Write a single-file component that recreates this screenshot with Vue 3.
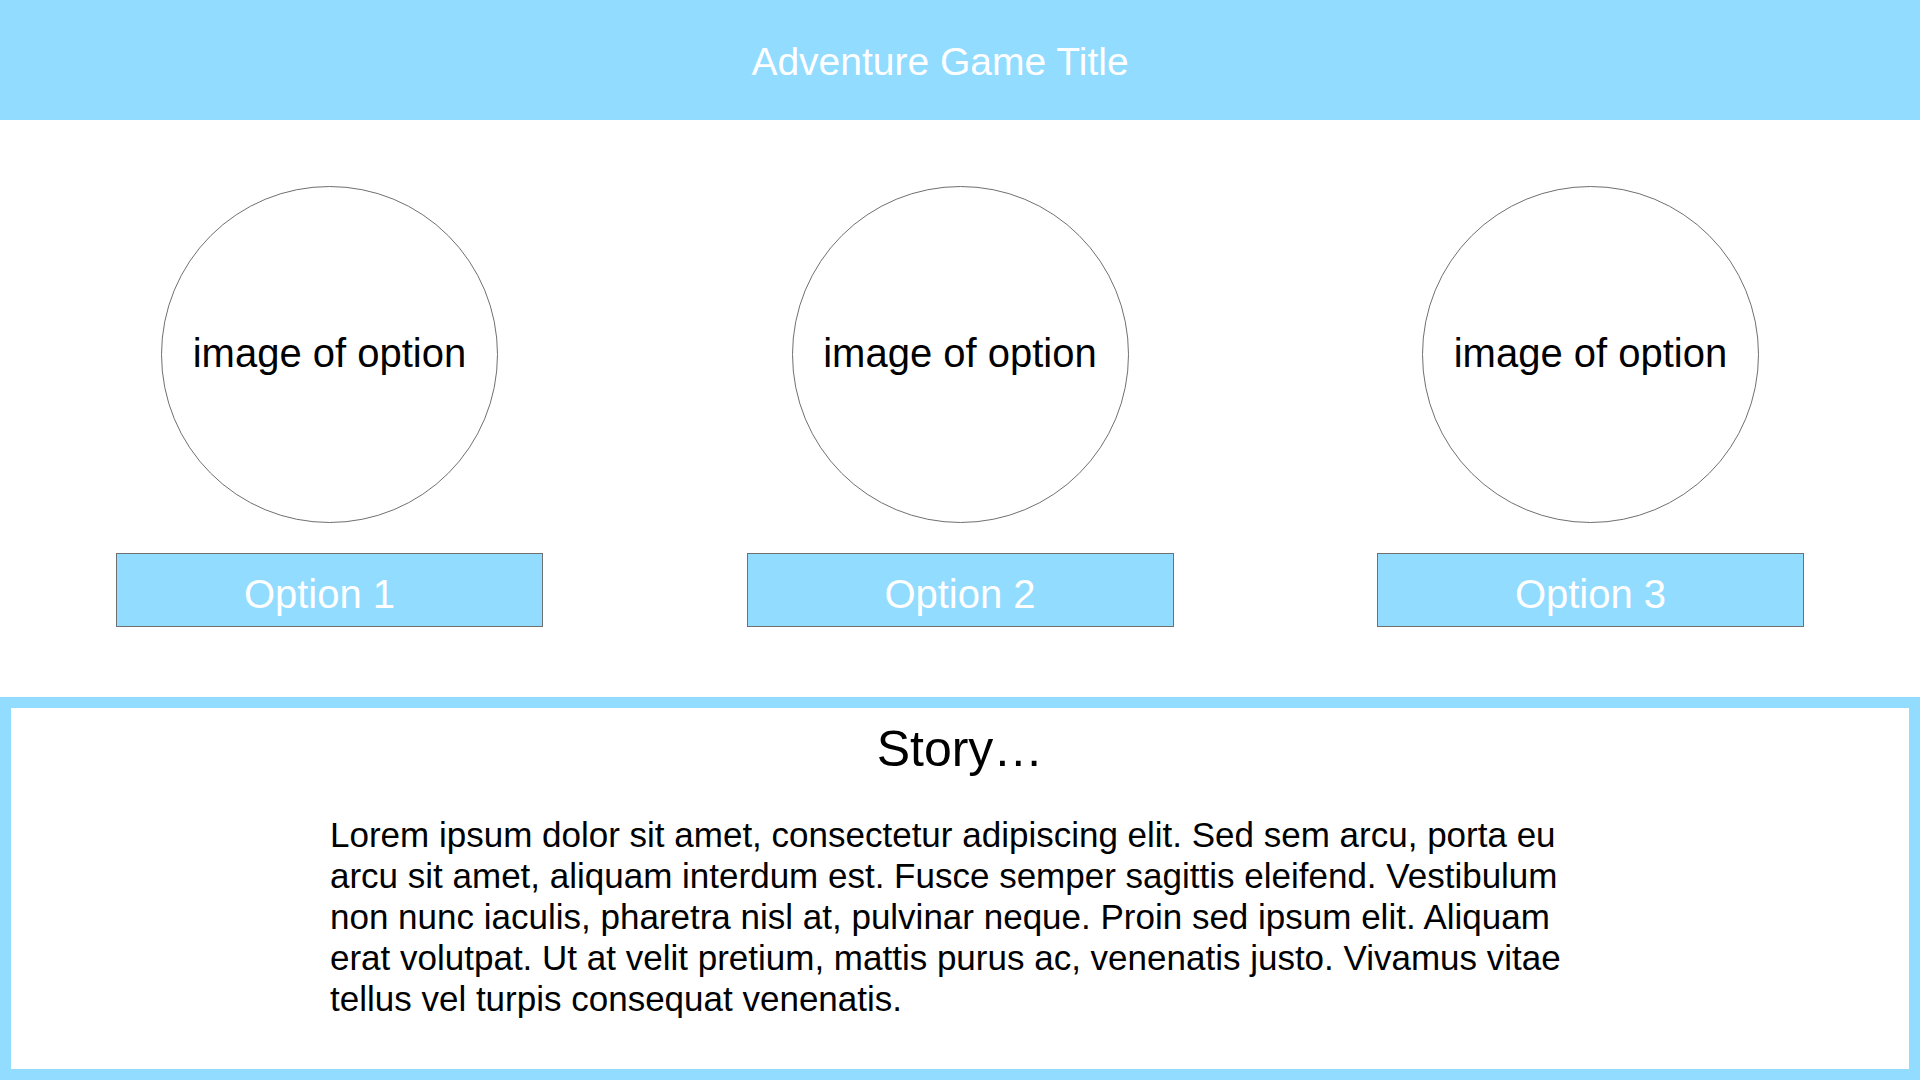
<script setup>
import { ref } from 'vue'

const options = [
  { id: 1, label: 'Option 1', image: 'image of option', inset: true },
  { id: 2, label: 'Option 2', image: 'image of option' },
  { id: 3, label: 'Option 3', image: 'image of option' },
]

const chosen = ref(null)
</script>

<template>
  <div class="game">
    <header class="banner">
      <h1 class="title">Adventure Game Title</h1>
    </header>

    <main class="options">
      <section v-for="option in options" :key="option.id" class="option">
        <div class="picture">{{ option.image }}</div>
        <button
          type="button"
          class="choice"
          :class="{ inset: option.inset }"
          @click="chosen = option.id"
        >{{ option.label }}</button>
      </section>
    </main>

    <section class="story">
      <h2 class="story-title">Story…</h2>
      <p class="story-text">
        Lorem ipsum dolor sit amet, consectetur adipiscing elit. Sed sem arcu, porta eu
        arcu sit amet, aliquam interdum est. Fusce semper sagittis eleifend. Vestibulum
        non nunc iaculis, pharetra nisl at, pulvinar neque. Proin sed ipsum elit. Aliquam
        erat volutpat. Ut at velit pretium, mattis purus ac, venenatis justo. Vivamus vitae
        tellus vel turpis consequat venenatis.
      </p>
    </section>
  </div>
</template>

<style>
body {
  margin: 0;
  background: #fff;
}
</style>

<style scoped>
.game {
  display: flex;
  flex-direction: column;
  min-height: 100vh;
  color: #000;
  font-family: "Liberation Sans", Arial, sans-serif;
  font-size: 40px;
}

.banner {
  box-sizing: border-box;
  min-height: 120px;
  padding: 38px 40px 34px 0;
  background: #92dcff;
  color: #fff;
  text-align: center;
}

.title {
  margin: 0;
  font-size: 39px;
  font-weight: 400;
  line-height: 48px;
}

.options {
  display: flex;
  justify-content: space-between;
  gap: 24px;
  padding: 66px 116px 70px;
}

.option {
  display: flex;
  flex: 0 1 427px;
  flex-direction: column;
  align-items: center;
  gap: 30px;
}

.picture {
  box-sizing: border-box;
  display: flex;
  align-items: center;
  justify-content: center;
  width: 337px;
  max-width: 100%;
  aspect-ratio: 1;
  padding-bottom: 2px;
  border: 1px solid #707070;
  border-radius: 50%;
  text-align: center;
}

.choice {
  box-sizing: border-box;
  width: 100%;
  min-height: 74px;
  padding: 8px 0 0;
  border: 1px solid #707070;
  border-radius: 0;
  background: #92dcff;
  color: #fff;
  font: inherit;
  cursor: pointer;
}

.choice.inset {
  padding-right: 20px;
}

.story {
  flex: 1;
  padding: 0 24px 24px;
  border: 11px solid #92dcff;
}

.story-title {
  margin: 0;
  font-size: 50px;
  font-weight: 400;
  line-height: 82px;
  text-align: center;
}

.story-text {
  max-width: 1260px;
  margin: 24px auto 0;
  font-size: 35px;
  line-height: 41px;
}
</style>
